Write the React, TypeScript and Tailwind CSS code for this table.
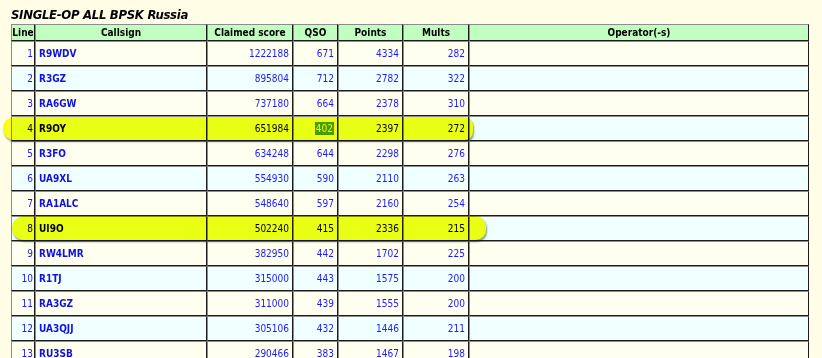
const rows: [number, string, string, string, string, string][] = [
  [1, 'R9WDV', '1222188', '671', '4334', '282'],
  [2, 'R3GZ', '895804', '712', '2782', '322'],
  [3, 'RA6GW', '737180', '664', '2378', '310'],
  [4, 'R9OY', '651984', '402', '2397', '272'],
  [5, 'R3FO', '634248', '644', '2298', '276'],
  [6, 'UA9XL', '554930', '590', '2110', '263'],
  [7, 'RA1ALC', '548640', '597', '2160', '254'],
  [8, 'UI9O', '502240', '415', '2336', '215'],
  [9, 'RW4LMR', '382950', '442', '1702', '225'],
  [10, 'R1TJ', '315000', '443', '1575', '200'],
  [11, 'RA3GZ', '311000', '439', '1555', '200'],
  [12, 'UA3QJJ', '305106', '432', '1446', '211'],
  [13, 'RU3SB', '290466', '383', '1467', '198'],
];

const marked = [4, 8];

const cell = 'border-l border-t border-l-[#8c8c8c] border-t-[#8c8c8c] border-r border-b border-r-[#1c1c1c] border-b-[#1c1c1c] flex items-center';

export default function App() {
  return (
    <div
      className="w-[822px] h-[358px] overflow-hidden bg-[#fffde6] pl-[11px] text-[10px]"
      style={{ fontFamily: '"DejaVu Sans Condensed", Tahoma, "DejaVu Sans", sans-serif' }}
    >
      <h1 className="h-[24px] pt-[8px] text-[13px] leading-[14px] font-bold italic text-black tracking-[-0.3px]">
        SINGLE-OP ALL BPSK Russia
      </h1>

      <div className="relative w-[798px]">
        <div className="grid grid-cols-[24px_172px_86px_45px_65px_66px_340px] border-r border-r-[#808080]">
          {['Line', 'Callsign', 'Claimed score', 'QSO', 'Points', 'Mults', 'Operator(-s)'].map((h) => (
            <div key={h} className={`${cell} h-[17px] justify-center bg-[#c0ffc0] font-bold text-black`}>
              {h}
            </div>
          ))}

          {rows.map(([n, call, score, qso, pts, mults]) => {
            const bg = n % 2 === 0 ? 'bg-[#f0ffff]' : 'bg-[#fffff0]';
            const hit = marked.includes(n);
            const num = hit ? 'text-black' : 'text-[#1a1aff]';
            return [
              <div key={`${n}a`} className={`${cell} ${bg} ${num} h-[25px] justify-end pr-[1px]`}>
                {n}
              </div>,
              <div key={`${n}b`} className={`${cell} ${bg} h-[25px] pl-[3px] font-bold ${hit ? 'text-black' : 'text-[#1010e0]'}`}>
                {call}
              </div>,
              <div key={`${n}c`} className={`${cell} ${bg} ${num} h-[25px] justify-end pr-[3px]`}>
                {score}
              </div>,
              <div key={`${n}d`} className={`${cell} ${bg} ${num} h-[25px] justify-end pr-[3px]`}>
                {n === 4 ? <span className="bg-[#4d9a06] text-[#eaff7a] px-[1px] leading-[13px]">{qso}</span> : qso}
              </div>,
              <div key={`${n}e`} className={`${cell} ${bg} ${num} h-[25px] justify-end pr-[3px]`}>
                {pts}
              </div>,
              <div key={`${n}f`} className={`${cell} ${bg} ${num} h-[25px] justify-end pr-[3px]`}>
                {mults}
              </div>,
              <div key={`${n}g`} className={`${cell} ${bg} h-[25px]`} />,
            ];
          })}
        </div>

        {/* marker strokes over rows 4 and 8 */}
        <div className="absolute left-[-8px] top-[93px] w-[470px] h-[23px] bg-[#f8ff14] mix-blend-multiply rounded-l-[14px] rounded-r-[10px] shadow-[1px_2px_2px_rgba(0,0,0,0.4)]" />
        <div className="absolute left-[1px] top-[192px] w-[474px] h-[24px] bg-[#f8ff14] mix-blend-multiply rounded-l-[14px] rounded-r-[12px] shadow-[1px_2px_2px_rgba(0,0,0,0.4)]" />
      </div>
    </div>
  );
}
